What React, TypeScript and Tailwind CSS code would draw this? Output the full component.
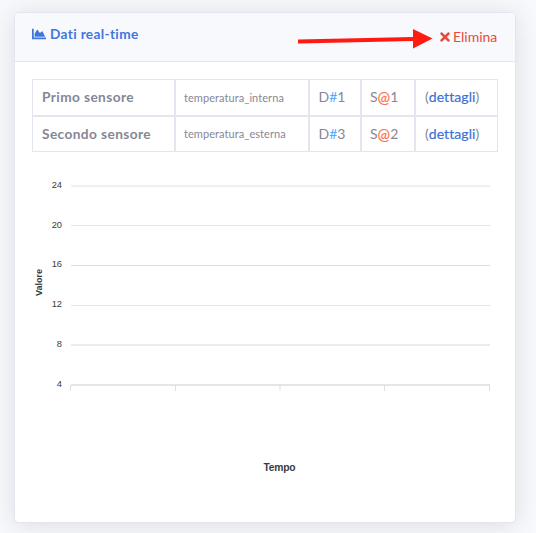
import { FaChartArea, FaTimes } from "react-icons/fa";

const sensors = [
  { label: "Primo sensore", name: "temperatura_interna", device: 1, channel: 1, height: "h-[37px]" },
  { label: "Secondo sensore", name: "temperatura_esterna", device: 3, channel: 2, height: "h-9" },
];

const gridLines = [
  { value: 24, y: 185, h: 2, label: 188, fill: "#f0f0f0" },
  { value: 20, y: 225, h: 1, label: 228, fill: "#e3e3e3" },
  { value: 16, y: 265, h: 1, label: 267, fill: "#dedede" },
  { value: 12, y: 305, h: 1, label: 307, fill: "#e3e3e3" },
  { value: 8, y: 344, h: 2, label: 347, fill: "#ececec" },
  { value: 4, y: 384, h: 2, label: 387, fill: "#e5e5e5" },
];

function Chart() {
  return (
    <svg width="466" height="340" viewBox="32 152 466 340" className="block font-['Liberation_Sans',Arial,sans-serif]" fill="#373d3f">
      {gridLines.map((g) => (
        <g key={g.value}>
          <rect x="71" y={g.y} width="419" height={g.h} fill={g.fill} />
          <text x="62" y={g.label} fontSize="9.3" textAnchor="end">
            {g.value}
          </text>
        </g>
      ))}
      {[70, 175, 279.5, 384, 489].map((x) => (
        <rect key={x} x={x} y="385" width="1" height="6" fill="#e0e0e0" />
      ))}
      <text x="279.5" y="471" fontSize="10.3" fontWeight="700" textAnchor="middle" textLength="32">
        Tempo
      </text>
      <text transform="translate(42 282.5) rotate(-90)" fontSize="9" fontWeight="700" textAnchor="middle" textLength="27">
        Valore
      </text>
    </svg>
  );
}

export default function App() {
  return (
    <main className="h-[533px] w-[536px] overflow-hidden bg-[#f8f9fc] pt-3 pl-3.5 font-['Lato','Open_Sans',sans-serif] text-sm leading-5 whitespace-nowrap text-[#858796] [font-variant-ligatures:none]">
      <section className="flex h-[511px] w-[502px] flex-col rounded-[5px] border border-[#e3e6f0] bg-white shadow-[0_2px_25px_rgba(58,59,69,0.15)]">
        <header className="flex h-[49px] shrink-0 items-start rounded-t-[4px] border-b border-[#e3e6f0] bg-[#f8f9fc] pr-[17px] pl-[17px]">
          <h6 className="flex items-center pt-[11px] text-[13.7px] font-bold tracking-[0.33px] text-[#4177dd]">
            <FaChartArea className="mr-1 size-3.5" />
            Dati real-time
          </h6>
          <svg width="136" height="24" viewBox="297 26 136 24" className="mt-[13px] ml-auto">
            <path d="M298 39.5 L413 37 V41 L298 43.5Z" fill="#ff1b12" />
            <path d="M413 29 L432.5 38.5 L413 48.5Z" fill="#ff1b12" />
          </svg>
          <a href="#elimina" className="ml-[7px] flex w-[58px] items-center pt-3.5 text-[#e74a3b]">
            <FaTimes viewBox="0 0 352 512" className="mr-[3px] h-3.5 w-2.5 shrink-0" />
            Elimina
          </a>
        </header>
        <div className="pt-[17px] pl-[17px]">
          <div className="w-[466px]">
            {sensors.map((s) => (
              <div
                key={s.label}
                className={`grid grid-cols-[143px_134px_52px_54px_83px] *:flex *:items-center *:border *:border-[#e3e6f0] *:pb-px ${s.height}`}
              >
                <div className="pl-[9px] text-[13.7px] font-bold tracking-[0.4px]">{s.label}</div>
                <div className="pl-2 pt-px text-[11px] tracking-[0.07px]">{s.name}</div>
                <div className="pl-[8.5px]">
                  D<span className="text-[#55aaff]">#</span>{s.device}
                </div>
                <div className="pl-2">
                  S<span className="text-[15px] text-[#ff7350] [-webkit-text-stroke:0.2px]">@</span>{s.channel}
                </div>
                <div className="pl-[9px]">
                  (<a href="#dettagli" className="tracking-[0.08px] text-[#3d70d8] [-webkit-text-stroke:0.2px]">dettagli</a>)
                </div>
              </div>
            ))}
          </div>
          <Chart />
        </div>
      </section>
    </main>
  );
}
